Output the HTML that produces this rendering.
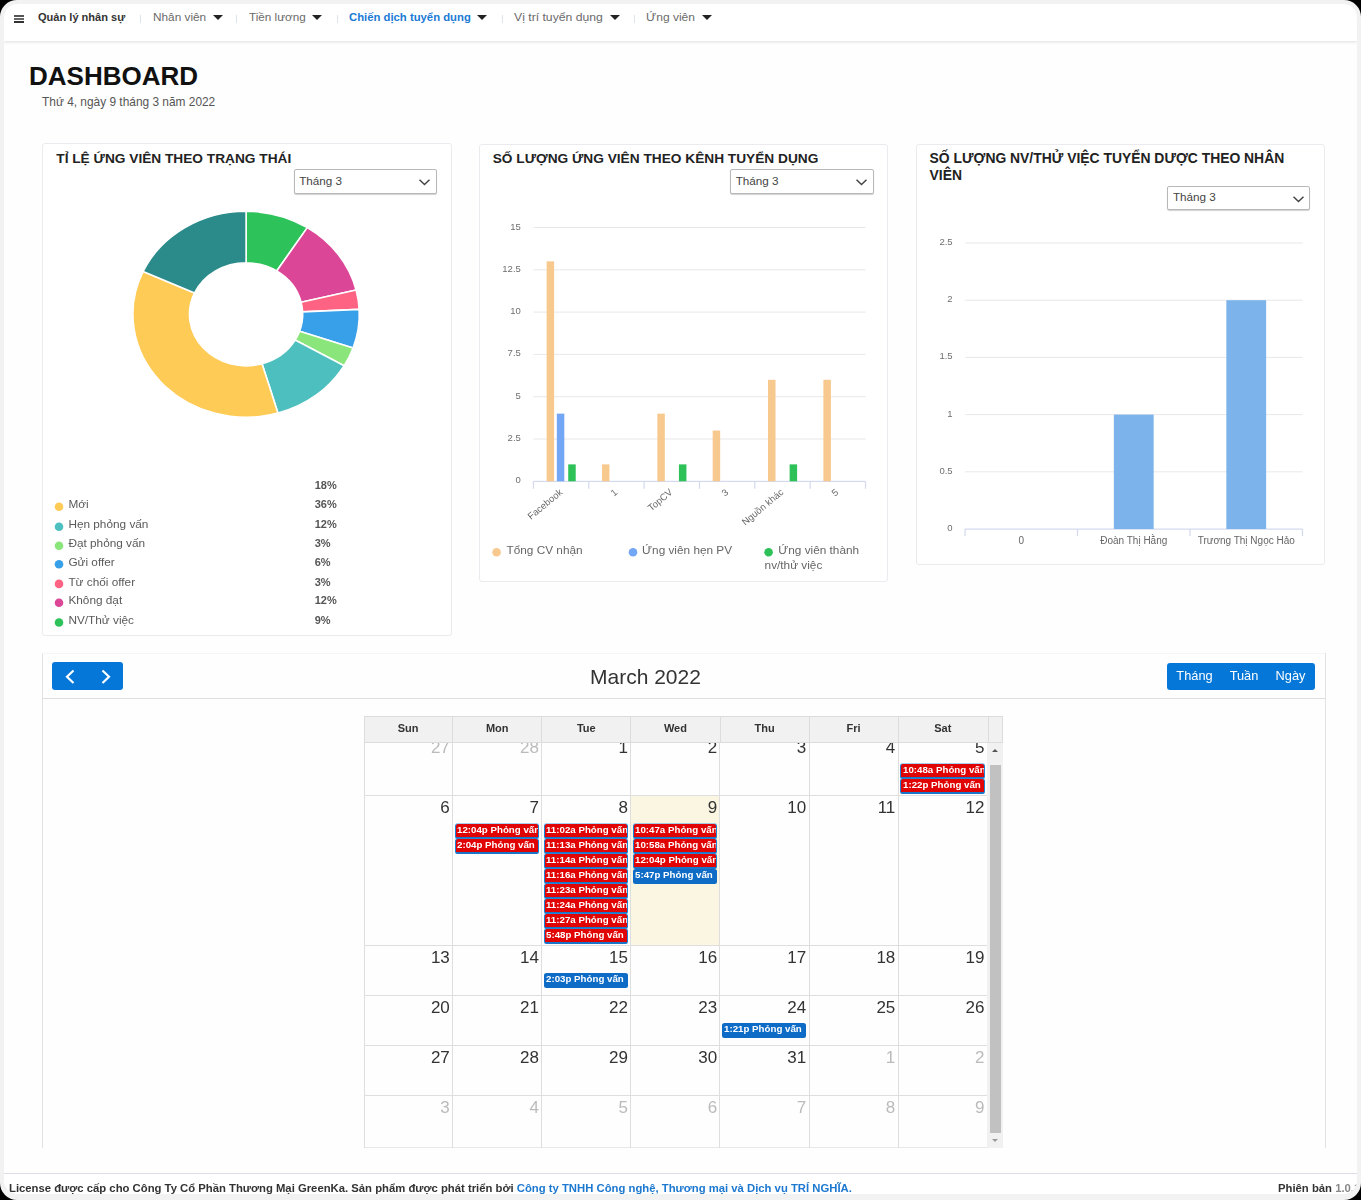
<!DOCTYPE html>
<html><head><meta charset="utf-8">
<style>
html,body{margin:0;padding:0;background:#000;width:1361px;height:1200px;overflow:hidden}
*{box-sizing:border-box}
body{font-family:"Liberation Sans",sans-serif;color:#333}
#frame{position:absolute;left:0;top:0;width:1361px;height:1200px;background:#f2f2f2;border-radius:17px;overflow:hidden;filter:blur(0.35px)}
#win{position:absolute;left:4px;top:4px;width:1353px;height:1190px;background:#fefefe;border-radius:14px;overflow:hidden}
.a{position:absolute}
.t{position:absolute;white-space:nowrap;line-height:1}
#nav{position:absolute;left:0;top:0;width:1353px;height:37px;background:#fff;box-shadow:0 1px 3px rgba(0,0,0,.13)}
.sep{position:absolute;top:10.8px;width:1px;height:8.5px;background:#dfe3ea}
.caret{position:absolute;width:0;height:0;border-left:5px solid transparent;border-right:5px solid transparent;border-top:5px solid #222}
.card{position:absolute;background:#fff;border:1px solid #ebebef;border-radius:3px}
.sel{position:absolute;background:#fff;border:1px solid #b8b8b8;border-radius:2px;box-shadow:0 1px 1px rgba(0,0,0,.18)}
.ttl{font-weight:bold;color:#222}
.lg{font-size:11.8px;color:#5a5a5a}
.pc{font-size:11px;font-weight:bold;color:#555}
.yl{font-size:9.5px;color:#6f6f6f;text-align:right}
.xl{width:120px;text-align:right;font-size:9.5px;color:#666;transform-origin:100% 50%;transform:rotate(-40deg)}
.lg2{font-size:11.8px;color:#666}
.xl3{width:120px;text-align:center;font-size:10px;color:#666}
.btn{background:#0477d8;border-radius:3px}
.vb{width:80px;text-align:center;font-size:12.8px;color:#fff}
.dh{width:80px;text-align:center;font-size:11px;font-weight:bold;color:#333}
.dn{font-size:17px;color:#333}
.om{color:#bbb}
.ev{width:84.3px;height:15px;border:1px solid #1b84d6;border-top-width:0;border-bottom-width:2.5px;border-bottom-color:#1a74c8;box-shadow:0 -1px 0 rgba(60,150,225,.45);border-radius:2.5px;font-size:9px;line-height:12.5px;color:#fff;white-space:nowrap;overflow:hidden;padding-left:1.2px;font-weight:bold}
.ev span{display:inline-block;transform:scaleX(1.08);transform-origin:0 50%}
.ev b{font-weight:bold}
.ev.r{background:#e00404}
.ev.b{background:#0f6cc6;border-color:#0f6cc6;box-shadow:none}
.st{font-size:11.7px;color:#444}
.ft{font-size:11.3px;font-weight:bold}
</style></head><body>
<div id="frame"><div id="win">
<!-- NAV (coordinates relative to win: subtract 4) -->
<div id="nav">
  <div class="a" style="left:10.3px;top:11.4px;width:9.8px;height:1.6px;background:#555"></div>
  <div class="a" style="left:10.3px;top:14.3px;width:9.8px;height:1.6px;background:#666"></div>
  <div class="a" style="left:10.3px;top:17.2px;width:9.8px;height:1.6px;background:#333"></div>
    <div class="t" style="left:34.4px;top:9.4px;font-size:10px;font-weight:bold;color:#333;transform:scaleX(1.105);transform-origin:0 0">Quản lý nhân sự</div>
  <div class="sep" style="left:136px"></div>
  <div class="t" style="left:148.6px;top:9.4px;font-size:10px;color:#6a6a6a;transform:scaleX(1.18);transform-origin:0 0">Nhân viên</div>
  <div class="caret" style="left:209.4px;top:11.2px"></div>
  <div class="sep" style="left:232px"></div>
  <div class="t" style="left:245.2px;top:9.4px;font-size:10px;color:#6a6a6a;transform:scaleX(1.17);transform-origin:0 0">Tiền lương</div>
  <div class="caret" style="left:308.3px;top:11.2px"></div>
  <div class="sep" style="left:332.5px"></div>
  <div class="t" style="left:344.6px;top:9.4px;font-size:10px;font-weight:bold;color:#1a7ad6;transform:scaleX(1.13);transform-origin:0 0">Chiến dịch tuyển dụng</div>
  <div class="caret" style="left:473px;top:11.2px"></div>
  <div class="sep" style="left:497.5px"></div>
  <div class="t" style="left:509.8px;top:9.4px;font-size:10px;color:#6a6a6a;transform:scaleX(1.22);transform-origin:0 0">Vị trí tuyển dụng</div>
  <div class="caret" style="left:606px;top:11.2px"></div>
  <div class="sep" style="left:629.7px"></div>
  <div class="t" style="left:642px;top:9.4px;font-size:10px;color:#6a6a6a;transform:scaleX(1.2);transform-origin:0 0">Ứng viên</div>
  <div class="caret" style="left:697.6px;top:11.2px"></div>
</div>
<div class="t" style="left:25px;top:59px;font-size:26px;font-weight:bold;color:#111">DASHBOARD</div>
<div class="t" style="left:38px;top:93px;font-size:11.9px;color:#555">Thứ 4, ngày 9 tháng 3 năm 2022</div>

<!-- CARDS -->
<div class="card" style="left:37.5px;top:139px;width:410px;height:493px"></div>
<div class="card" style="left:475px;top:139.5px;width:409px;height:438.3px"></div>
<div class="card" style="left:911.5px;top:139.5px;width:409.5px;height:421.5px"></div>

<div class="t ttl" style="left:52.3px;top:148px;font-size:13.7px">TỈ LỆ ỨNG VIÊN THEO TRẠNG THÁI</div>
<div class="t ttl" style="left:488.7px;top:148px;font-size:13.7px">SỐ LƯỢNG ỨNG VIÊN THEO KÊNH TUYỂN DỤNG</div>
<div class="t ttl" style="left:925.6px;top:148px;font-size:13.9px">SỐ LƯỢNG NV/THỬ VIỆC TUYỂN DƯỢC THEO NHÂN</div>
<div class="t ttl" style="left:925.6px;top:165.4px;font-size:13.9px">VIÊN</div>

<div class="sel" style="left:289.5px;top:164.5px;width:143.5px;height:25.5px"></div>
<div class="sel" style="left:726px;top:164.8px;width:143.5px;height:25.5px"></div>
<div class="sel" style="left:1163.2px;top:181.6px;width:143.2px;height:24.6px"></div>
<div class="t st" style="left:295.2px;top:170.5px">Tháng 3</div>
<div class="t st" style="left:731.7px;top:170.8px">Tháng 3</div>
<div class="t st" style="left:1168.9px;top:187.2px">Tháng 3</div>
<svg class="a" style="left:414px;top:174px" width="14" height="9" viewBox="0 0 14 9"><path d="M1.5,1.8 L6.5,6.5 L11.5,1.8" fill="none" stroke="#444" stroke-width="1.5"/></svg>
<svg class="a" style="left:850.5px;top:174.3px" width="14" height="9" viewBox="0 0 14 9"><path d="M1.5,1.8 L6.5,6.5 L11.5,1.8" fill="none" stroke="#444" stroke-width="1.5"/></svg>
<svg class="a" style="left:1287.5px;top:190.6px" width="14" height="9" viewBox="0 0 14 9"><path d="M1.5,1.8 L6.5,6.5 L11.5,1.8" fill="none" stroke="#444" stroke-width="1.5"/></svg>

<!-- FOOTER -->
<div class="a" style="left:0;top:1169px;width:1353px;height:22px;background:#fff;border-top:1px solid #dcdde8"></div>
<div class="t ft" style="left:5px;top:1178.5px"><span style="color:#333">License được cấp cho Công Ty Cổ Phần Thương Mại GreenKa. Sản phẩm được phát triển bởi </span><span style="color:#1d78d0">Công ty TNHH Công nghệ, Thương mại và Dịch vụ TRÍ NGHĨA.</span></div>
<div class="t ft" style="left:1274px;top:1178.5px;color:#333">Phiên bản <span style="color:#888">1.0.1</span></div>

<!--CHARTS-->
<svg class="a" style="left:0;top:0" width="1353" height="1190" viewBox="0 0 1353 1190">
<path d="M242.10,207.30A113.2,103.0 0 0 1 303.30,223.65L272.70,266.98A56.6,51.5 0 0 0 242.10,258.80Z" fill="#2ec25a" stroke="#fff" stroke-width="1.6" stroke-linejoin="round"/>
<path d="M303.30,223.65A113.2,103.0 0 0 1 352.11,286.02L297.10,298.16A56.6,51.5 0 0 0 272.70,266.98Z" fill="#dc4696" stroke="#fff" stroke-width="1.6" stroke-linejoin="round"/>
<path d="M352.11,286.02A113.2,103.0 0 0 1 355.17,305.40L298.64,307.85A56.6,51.5 0 0 0 297.10,298.16Z" fill="#fe6384" stroke="#fff" stroke-width="1.6" stroke-linejoin="round"/>
<path d="M355.17,305.40A113.2,103.0 0 0 1 349.07,343.99L295.59,327.14A56.6,51.5 0 0 0 298.64,307.85Z" fill="#38a0e8" stroke="#fff" stroke-width="1.6" stroke-linejoin="round"/>
<path d="M349.07,343.99A113.2,103.0 0 0 1 340.13,361.80L291.12,336.05A56.6,51.5 0 0 0 295.59,327.14Z" fill="#8ae57a" stroke="#fff" stroke-width="1.6" stroke-linejoin="round"/>
<path d="M340.13,361.80A113.2,103.0 0 0 1 273.99,409.13L258.05,359.71A56.6,51.5 0 0 0 291.12,336.05Z" fill="#4dbfbf" stroke="#fff" stroke-width="1.6" stroke-linejoin="round"/>
<path d="M273.99,409.13A113.2,103.0 0 0 1 139.13,267.51L190.61,288.91A56.6,51.5 0 0 0 258.05,359.71Z" fill="#ffcb57" stroke="#fff" stroke-width="1.6" stroke-linejoin="round"/>
<path d="M139.13,267.51A113.2,103.0 0 0 1 242.10,207.30L242.10,258.80A56.6,51.5 0 0 0 190.61,288.91Z" fill="#2a8b8a" stroke="#fff" stroke-width="1.6" stroke-linejoin="round"/>
<circle cx="55" cy="502.8" r="4.3" fill="#ffcb57"/>
<circle cx="55" cy="522.8" r="4.3" fill="#4dbfbf"/>
<circle cx="55" cy="541.7" r="4.3" fill="#8ae57a"/>
<circle cx="55" cy="560.2" r="4.3" fill="#38a0e8"/>
<circle cx="55" cy="579.9" r="4.3" fill="#fe6384"/>
<circle cx="55" cy="598.7" r="4.3" fill="#dc4696"/>
<circle cx="55" cy="618.5" r="4.3" fill="#2ec25a"/>
<rect x="529.4" y="434.5" width="332.1" height="1" fill="#e8e8e8"/>
<rect x="529.4" y="392.2" width="332.1" height="1" fill="#e8e8e8"/>
<rect x="529.4" y="349.9" width="332.1" height="1" fill="#e8e8e8"/>
<rect x="529.4" y="307.6" width="332.1" height="1" fill="#e8e8e8"/>
<rect x="529.4" y="265.3" width="332.1" height="1" fill="#e8e8e8"/>
<rect x="529.4" y="223.0" width="332.1" height="1" fill="#e8e8e8"/>
<rect x="529.4" y="476.8" width="332.1" height="1.2" fill="#d3daee"/>
<rect x="528.8" y="477.3" width="1.2" height="7.5" fill="#d3daee"/>
<rect x="584.15" y="477.3" width="1.2" height="7.5" fill="#d3daee"/>
<rect x="639.5" y="477.3" width="1.2" height="7.5" fill="#d3daee"/>
<rect x="694.85" y="477.3" width="1.2" height="7.5" fill="#d3daee"/>
<rect x="750.1999999999999" y="477.3" width="1.2" height="7.5" fill="#d3daee"/>
<rect x="805.55" y="477.3" width="1.2" height="7.5" fill="#d3daee"/>
<rect x="860.9" y="477.3" width="1.2" height="7.5" fill="#d3daee"/>
<rect x="542.62" y="257.34" width="7.5" height="219.96" fill="#f8c98e"/>
<rect x="597.97" y="460.38" width="7.5" height="16.92" fill="#f8c98e"/>
<rect x="653.32" y="409.62" width="7.5" height="67.68" fill="#f8c98e"/>
<rect x="708.67" y="426.54" width="7.5" height="50.76" fill="#f8c98e"/>
<rect x="764.02" y="375.78" width="7.5" height="101.52" fill="#f8c98e"/>
<rect x="819.38" y="375.78" width="7.5" height="101.52" fill="#f8c98e"/>
<rect x="552.82" y="409.62" width="7.5" height="67.68" fill="#74a6f6"/>
<rect x="564.22" y="460.38" width="7.5" height="16.92" fill="#2ec158"/>
<rect x="674.92" y="460.38" width="7.5" height="16.92" fill="#2ec158"/>
<rect x="785.62" y="460.38" width="7.5" height="16.92" fill="#2ec158"/>
<circle cx="492.6" cy="548.3" r="4.3" fill="#f8c98e"/>
<circle cx="629" cy="548.3" r="4.3" fill="#74a6f6"/>
<circle cx="764.6" cy="548.3" r="4.3" fill="#2ec158"/>
<rect x="961" y="467.3" width="337.5" height="1" fill="#e8e8e8"/>
<rect x="961" y="410.1" width="337.5" height="1" fill="#e8e8e8"/>
<rect x="961" y="352.9" width="337.5" height="1" fill="#e8e8e8"/>
<rect x="961" y="295.7" width="337.5" height="1" fill="#e8e8e8"/>
<rect x="961" y="238.5" width="337.5" height="1" fill="#e8e8e8"/>
<rect x="961" y="524.5" width="337.5" height="1.2" fill="#d3daee"/>
<rect x="960.4" y="525.0" width="1.2" height="7" fill="#d3daee"/>
<rect x="1072.9" y="525.0" width="1.2" height="7" fill="#d3daee"/>
<rect x="1185.4" y="525.0" width="1.2" height="7" fill="#d3daee"/>
<rect x="1297.9" y="525.0" width="1.2" height="7" fill="#d3daee"/>
<rect x="1109.85" y="410.60" width="39.8" height="114.40" fill="#7bb3ea"/>
<rect x="1222.35" y="296.20" width="39.8" height="228.80" fill="#7bb3ea"/>
</svg>
<div class="t pc" style="left:310.7px;top:476.2px">18%</div>
<div class="t lg" style="left:64.4px;top:495.4px">Mới</div>
<div class="t pc" style="left:310.7px;top:495.4px">36%</div>
<div class="t lg" style="left:64.4px;top:515.4px">Hẹn phỏng vấn</div>
<div class="t pc" style="left:310.7px;top:515.4px">12%</div>
<div class="t lg" style="left:64.4px;top:534.3px">Đạt phỏng vấn</div>
<div class="t pc" style="left:310.7px;top:534.3px">3%</div>
<div class="t lg" style="left:64.4px;top:552.8px">Gửi offer</div>
<div class="t pc" style="left:310.7px;top:552.8px">6%</div>
<div class="t lg" style="left:64.4px;top:572.5px">Từ chối offer</div>
<div class="t pc" style="left:310.7px;top:572.5px">3%</div>
<div class="t lg" style="left:64.4px;top:591.3px">Không đạt</div>
<div class="t pc" style="left:310.7px;top:591.3px">12%</div>
<div class="t lg" style="left:64.4px;top:611.1px">NV/Thử việc</div>
<div class="t pc" style="left:310.7px;top:611.1px">9%</div>
<div class="t yl" style="right:836.2px;top:429.0px">2.5</div>
<div class="t yl" style="right:836.2px;top:386.7px">5</div>
<div class="t yl" style="right:836.2px;top:344.4px">7.5</div>
<div class="t yl" style="right:836.2px;top:302.1px">10</div>
<div class="t yl" style="right:836.2px;top:259.8px">12.5</div>
<div class="t yl" style="right:836.2px;top:217.5px">15</div>
<div class="t yl" style="right:836.2px;top:471.3px">0</div>
<div class="t xl" style="left:436.57000000000005px;top:482px">Facebook</div>
<div class="t xl" style="left:491.91999999999996px;top:482px">1</div>
<div class="t xl" style="left:547.27px;top:482px">TopCV</div>
<div class="t xl" style="left:602.62px;top:482px">3</div>
<div class="t xl" style="left:657.98px;top:482px">Nguồn khác</div>
<div class="t xl" style="left:713.33px;top:482px">5</div>
<div class="t lg2" style="left:502.5px;top:540.8px">Tổng CV nhận</div>
<div class="t lg2" style="left:638px;top:540.8px">Ứng viên hẹn PV</div>
<div class="t lg2" style="left:774.2px;top:540.8px">Ứng viên thành</div>
<div class="t lg2" style="left:760.6px;top:556px">nv/thử việc</div>
<div class="t yl" style="right:404.4px;top:461.8px">0.5</div>
<div class="t yl" style="right:404.4px;top:404.6px">1</div>
<div class="t yl" style="right:404.4px;top:347.4px">1.5</div>
<div class="t yl" style="right:404.4px;top:290.2px">2</div>
<div class="t yl" style="right:404.4px;top:233.0px">2.5</div>
<div class="t yl" style="right:404.4px;top:519.0px">0</div>
<div class="t xl3" style="left:957.25px;top:531.5px">0</div>
<div class="t xl3" style="left:1069.75px;top:531.5px">Đoàn Thị Hằng</div>
<div class="t xl3" style="left:1182.25px;top:531.5px">Trương Thị Ngọc Hảo</div>
<!--/CHARTS-->
<!--CAL-->
<div class="a" style="left:37.5px;top:649px;width:1px;height:494.5999999999999px;background:#e2e2e2"></div>
<div class="a" style="left:1320.5px;top:649px;width:1px;height:494.5999999999999px;background:#e2e2e2"></div>
<div class="a" style="left:37.5px;top:649px;width:1283.5px;height:1px;background:#f5f5f5"></div>
<div class="a" style="left:37.5px;top:693.5px;width:1283.5px;height:1.5px;background:#dedede"></div>
<div class="a btn" style="left:47.8px;top:658px;width:71.5px;height:28.200000000000045px"></div>
<svg class="a" style="left:56px;top:661px" width="60" height="24" viewBox="0 0 60 24"><path d="M13.5,5.5 L7,11.8 L13.5,18" fill="none" stroke="#fff" stroke-width="2.2"/><path d="M42.5,5.5 L49,11.8 L42.5,18" fill="none" stroke="#fff" stroke-width="2.2"/></svg>
<div class="t" style="left:586px;top:661.7px;font-size:21px;color:#333">March 2022</div>
<div class="a btn" style="left:1163px;top:658.5px;width:148px;height:27.5px"></div>
<div class="t vb" style="left:1150.5px;top:665.5px">Tháng</div>
<div class="t vb" style="left:1200px;top:665.5px">Tuần</div>
<div class="t vb" style="left:1246.5px;top:665.5px">Ngày</div>
<div class="a" style="left:359.6px;top:711.5px;width:639.8px;height:27.0px;background:#f1f1f1;border:1px solid #dcdcdc"></div>
<div class="t dh" style="left:364.15px;top:718.8000000000001px">Sun</div>
<div class="t dh" style="left:453.25px;top:718.8000000000001px">Mon</div>
<div class="t dh" style="left:542.35px;top:718.8000000000001px">Tue</div>
<div class="t dh" style="left:631.45px;top:718.8000000000001px">Wed</div>
<div class="t dh" style="left:720.55px;top:718.8000000000001px">Thu</div>
<div class="t dh" style="left:809.65px;top:718.8000000000001px">Fri</div>
<div class="t dh" style="left:898.75px;top:718.8000000000001px">Sat</div>
<div class="a" style="left:448.2px;top:711.5px;width:1px;height:27.0px;background:#dcdcdc"></div>
<div class="a" style="left:537.3px;top:711.5px;width:1px;height:27.0px;background:#dcdcdc"></div>
<div class="a" style="left:626.4px;top:711.5px;width:1px;height:27.0px;background:#dcdcdc"></div>
<div class="a" style="left:715.5px;top:711.5px;width:1px;height:27.0px;background:#dcdcdc"></div>
<div class="a" style="left:804.6px;top:711.5px;width:1px;height:27.0px;background:#dcdcdc"></div>
<div class="a" style="left:893.7px;top:711.5px;width:1px;height:27.0px;background:#dcdcdc"></div>
<div class="a" style="left:983.8px;top:711.5px;width:1px;height:27.0px;background:#dcdcdc"></div>
<div class="a" style="left:359.6px;top:738.5px;width:639.8px;height:406.29999999999995px;overflow:hidden">
<div class="a" style="left:267.29999999999995px;top:53.299999999999955px;width:89.1px;height:149.60000000000002px;background:#faf6e2"></div>
<div class="a" style="left:0;top:52.80px;width:623.6999999999999px;height:1px;background:#dedede"></div>
<div class="a" style="left:0;top:202.40px;width:623.6999999999999px;height:1px;background:#dedede"></div>
<div class="a" style="left:0;top:252.20px;width:623.6999999999999px;height:1px;background:#dedede"></div>
<div class="a" style="left:0;top:302.40px;width:623.6999999999999px;height:1px;background:#dedede"></div>
<div class="a" style="left:0;top:352.60px;width:623.6999999999999px;height:1px;background:#dedede"></div>
<div class="a" style="left:0;top:404.30px;width:623.6999999999999px;height:1px;background:#e8e8e8"></div>
<div class="a" style="left:0.00px;top:0;width:1px;height:405.29999999999995px;background:#dedede"></div>
<div class="a" style="left:88.60px;top:0;width:1px;height:405.29999999999995px;background:#dedede"></div>
<div class="a" style="left:177.70px;top:0;width:1px;height:405.29999999999995px;background:#dedede"></div>
<div class="a" style="left:266.80px;top:0;width:1px;height:405.29999999999995px;background:#dedede"></div>
<div class="a" style="left:355.90px;top:0;width:1px;height:405.29999999999995px;background:#dedede"></div>
<div class="a" style="left:445.00px;top:0;width:1px;height:405.29999999999995px;background:#dedede"></div>
<div class="a" style="left:534.10px;top:0;width:1px;height:405.29999999999995px;background:#dedede"></div>
<div class="a" style="left:623.20px;top:0;width:1px;height:405.29999999999995px;background:#dedede"></div>
<div class="t dn om" style="right:553.60px;top:-3.50px">27</div>
<div class="t dn om" style="right:464.50px;top:-3.50px">28</div>
<div class="t dn" style="right:375.40px;top:-3.50px">1</div>
<div class="t dn" style="right:286.30px;top:-3.50px">2</div>
<div class="t dn" style="right:197.20px;top:-3.50px">3</div>
<div class="t dn" style="right:108.10px;top:-3.50px">4</div>
<div class="t dn" style="right:19.00px;top:-3.50px">5</div>
<div class="t dn" style="right:553.60px;top:56.80px">6</div>
<div class="t dn" style="right:464.50px;top:56.80px">7</div>
<div class="t dn" style="right:375.40px;top:56.80px">8</div>
<div class="t dn" style="right:286.30px;top:56.80px">9</div>
<div class="t dn" style="right:197.20px;top:56.80px">10</div>
<div class="t dn" style="right:108.10px;top:56.80px">11</div>
<div class="t dn" style="right:19.00px;top:56.80px">12</div>
<div class="t dn" style="right:553.60px;top:206.40px">13</div>
<div class="t dn" style="right:464.50px;top:206.40px">14</div>
<div class="t dn" style="right:375.40px;top:206.40px">15</div>
<div class="t dn" style="right:286.30px;top:206.40px">16</div>
<div class="t dn" style="right:197.20px;top:206.40px">17</div>
<div class="t dn" style="right:108.10px;top:206.40px">18</div>
<div class="t dn" style="right:19.00px;top:206.40px">19</div>
<div class="t dn" style="right:553.60px;top:256.20px">20</div>
<div class="t dn" style="right:464.50px;top:256.20px">21</div>
<div class="t dn" style="right:375.40px;top:256.20px">22</div>
<div class="t dn" style="right:286.30px;top:256.20px">23</div>
<div class="t dn" style="right:197.20px;top:256.20px">24</div>
<div class="t dn" style="right:108.10px;top:256.20px">25</div>
<div class="t dn" style="right:19.00px;top:256.20px">26</div>
<div class="t dn" style="right:553.60px;top:306.40px">27</div>
<div class="t dn" style="right:464.50px;top:306.40px">28</div>
<div class="t dn" style="right:375.40px;top:306.40px">29</div>
<div class="t dn" style="right:286.30px;top:306.40px">30</div>
<div class="t dn" style="right:197.20px;top:306.40px">31</div>
<div class="t dn om" style="right:108.10px;top:306.40px">1</div>
<div class="t dn om" style="right:19.00px;top:306.40px">2</div>
<div class="t dn om" style="right:553.60px;top:356.60px">3</div>
<div class="t dn om" style="right:464.50px;top:356.60px">4</div>
<div class="t dn om" style="right:375.40px;top:356.60px">5</div>
<div class="t dn om" style="right:286.30px;top:356.60px">6</div>
<div class="t dn om" style="right:197.20px;top:356.60px">7</div>
<div class="t dn om" style="right:108.10px;top:356.60px">8</div>
<div class="t dn om" style="right:19.00px;top:356.60px">9</div>
<div class="a ev r" style="left:536.80px;top:21.50px"><span>10:48a Phỏng vấn</span></div>
<div class="a ev r" style="left:536.80px;top:36.50px"><span>1:22p Phỏng vấn</span></div>
<div class="a ev r" style="left:91.30px;top:81.30px"><span>12:04p Phỏng vấn</span></div>
<div class="a ev r" style="left:91.30px;top:96.30px"><span>2:04p Phỏng vấn</span></div>
<div class="a ev r" style="left:180.40px;top:81.30px"><span>11:02a Phỏng vấn</span></div>
<div class="a ev r" style="left:180.40px;top:96.30px"><span>11:13a Phỏng vấn</span></div>
<div class="a ev r" style="left:180.40px;top:111.30px"><span>11:14a Phỏng vấn</span></div>
<div class="a ev r" style="left:180.40px;top:126.30px"><span>11:16a Phỏng vấn</span></div>
<div class="a ev r" style="left:180.40px;top:141.30px"><span>11:23a Phỏng vấn</span></div>
<div class="a ev r" style="left:180.40px;top:156.30px"><span>11:24a Phỏng vấn</span></div>
<div class="a ev r" style="left:180.40px;top:171.30px"><span>11:27a Phỏng vấn</span></div>
<div class="a ev r" style="left:180.40px;top:186.30px"><span>5:48p Phỏng vấn</span></div>
<div class="a ev r" style="left:269.50px;top:81.30px"><span>10:47a Phỏng vấn</span></div>
<div class="a ev r" style="left:269.50px;top:96.30px"><span>10:58a Phỏng vấn</span></div>
<div class="a ev r" style="left:269.50px;top:111.30px"><span>12:04p Phỏng vấn</span></div>
<div class="a ev b" style="left:269.50px;top:126.30px"><span>5:47p Phỏng vấn</span></div>
<div class="a ev b" style="left:180.40px;top:230.70px"><span>2:03p Phỏng vấn</span></div>
<div class="a ev b" style="left:358.60px;top:280.90px"><span>1:21p Phỏng vấn</span></div>
<div class="a" style="left:623.6999999999999px;top:0;width:16.100000000000023px;height:405.29999999999995px;background:#f1f1f1"></div>
<div class="a" style="left:626.8px;top:22.5px;width:11px;height:368.4000000000001px;background:#c1c1c1"></div>
<div class="a" style="left:628.9px;top:6.0px;width:0;height:0;border-left:3.5px solid transparent;border-right:3.5px solid transparent;border-bottom:3.5px solid #555"></div>
<div class="a" style="left:628.9px;top:396.5px;width:0;height:0;border-left:3.5px solid transparent;border-right:3.5px solid transparent;border-top:3.5px solid #999"></div>
</div>
<!--/CAL-->
</div></div>
</body></html>
